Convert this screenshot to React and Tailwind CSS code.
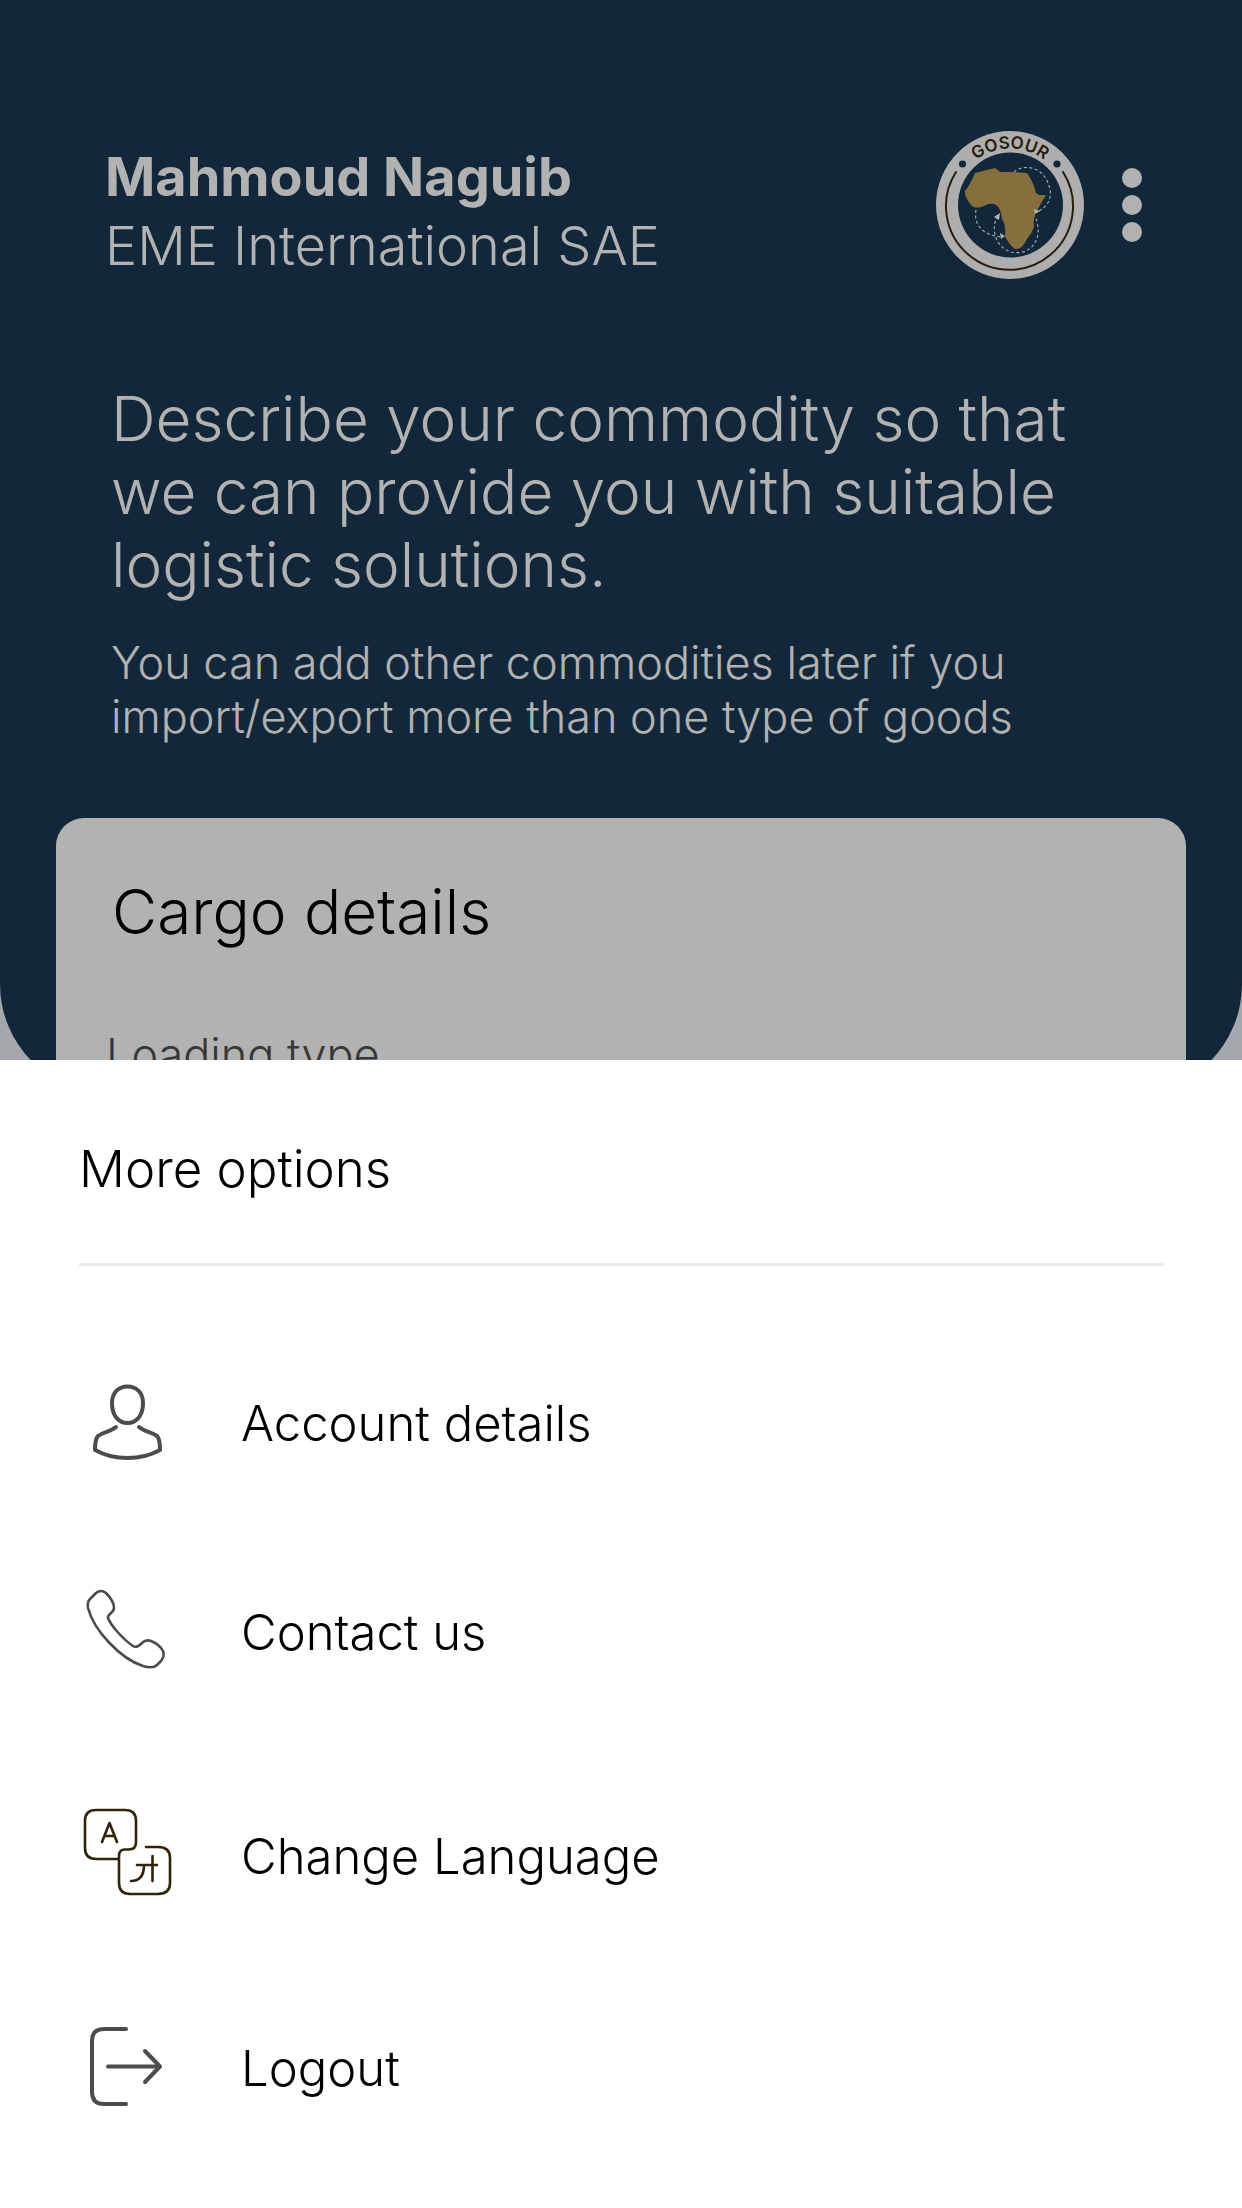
import React, { useState } from 'react';

const GosourLogo = () => (
  <svg viewBox="0 0 148 148" className="w-[148px] h-[148px]" role="img" aria-label="Gosour">
    <defs>
      <path id="logo-arc" d="M 17.500 74 A 56.500 56.500 0 0 1 130.500 74" />
    </defs>
    <circle cx="74" cy="74" r="74" fill="#fafafa" />
    <circle cx="74.500" cy="74" r="52.5" fill="#1a3854" />
    <path d="M20 41 A63.500 63.500 0 1 0 127 41" fill="none" stroke="#3a2c10" strokeWidth="2" strokeLinecap="round" />
    <circle cx="26.500" cy="33" r="3.600" fill="#1a3854" />
    <circle cx="121" cy="33" r="3.600" fill="#1a3854" />
    <text fontFamily="Inter" fontSize="17" fontWeight="600" fill="#3a2c10" textAnchor="middle">
      <textPath href="#logo-arc" startOffset="50%">GOSOUR</textPath>
    </text>
    <g fill="none" stroke="#e8f1f8" strokeWidth="1.200" strokeDasharray="3 2.500">
      <path d="M78 41 C86 33 106 35 112 52 C118 66 112 76 101 81" />
      <path d="M40 79 C37 94 48 105 66 106" />
      <path d="M62 85 C54 97 59 116 75 121 C94 125 104 110 102 96 C101 90 100 87 98 84" />
    </g>
    <path
      d="M39 42 L59 37 L64 41 L75 41 L91 42 Q97 50 100 62 L103 64 L110 64 Q103 76 99 83 Q97 91 98 96 Q96 102 91 108 Q86 119 79 118 Q73 114 69 105 Q70 94 66 88 Q65 77 60 74 Q54 71 48 75 Q40 78 36 75 Q28 66 29 60 Q34 54 39 42 Z"
      fill="#c09f58"
    />
    <path d="M64 82 L63 89 L58 86 Z M98 78 L104 80 L99 83 Z M64 102 L69 105 L65 108 Z" fill="#fff" />
  </svg>
);

const AccountIcon = () => (
  <svg viewBox="0 4 120 120" className="w-[120px] h-[120px]" fill="none" stroke="#4b4c4e" strokeWidth="4" strokeLinecap="round" strokeLinejoin="round">
    <path d="M57.500 26.500 C66 26.500 73 32 73 43 C73 55 67 63 57.500 63 C48 63 42 55 42 43 C42 32 49 26.500 57.500 26.500 Z" />
    <path d="M46 67 C40 72 33 72 28 76 C25 79 25 85 25 90 C34 95 45 98 57.500 98 C70 98 81 95 90 90 C90 85 90 79 87 76 C82 72 75 72 69 67" />
  </svg>
);

const PhoneIcon = () => (
  <svg viewBox="0 3 120 120" className="w-[120px] h-[120px]" fill="none" stroke="#4b4c4e" strokeWidth="2.600" strokeLinecap="round" strokeLinejoin="round">
    <path d="M20 29 L26 23 Q31 19 36 23 C40 27 44 33 44 38 C44 43 37 44 38 48 C41 56 54 70 63 76 C66 78 69 76 72 73 Q76 69 81 71 C86 73 91 77 93 81 Q95 86 91 91 L87 95 Q83 99 73 96 C51 89 24 61 18 38 Q17 32 20 29 Z" />
  </svg>
);

const LanguageIcon = () => (
  <svg viewBox="0 7 120 120" className="w-[120px] h-[120px]" fill="none" stroke="#302308" strokeWidth="2.600" strokeLinecap="round" strokeLinejoin="round">
    <path d="M49 69 H26 Q15 69 15 58 V31 Q15 20 26 20 H55 Q66 20 66 31 V52 Q66 59.500 59 59.500 H55 Q49 59.500 49 66 V93 Q49 104 60 104 H88 Q100 104 100 93 V68 Q100 57 88 57 H76" />
    <path d="M32 52 L39.500 33 L47 52 M35 46 H44" />
    <path d="M67 75 H87 M82.500 66 V91 M74 75 C74 85 70 91 61 91" />
  </svg>
);

const LogoutIcon = () => (
  <svg viewBox="0 0 120 120" className="w-[120px] h-[120px]" fill="none" stroke="#4b4c4e" strokeWidth="4" strokeLinecap="round" strokeLinejoin="round">
    <path d="M56 20 H34 Q22 20 22 32 V83 Q22 95 34 95 H56" />
    <path d="M38 57.500 H90 M75 42 L90 57.500 L75 73" />
  </svg>
);

const menuItems = [
  { id: "account", label: "Account details", icon: AccountIcon, height: "h-[196px]" },
  { id: "contact", label: "Contact us", icon: PhoneIcon, height: "h-[222px]" },
  { id: "language", label: "Change Language", icon: LanguageIcon, height: "h-[226px]" },
  { id: "logout", label: "Logout", icon: LogoutIcon, height: "h-[198px]" }
];

const MoreOptionsSheet = ({ isOpen, onClose }) => {
  if (!isOpen) return null;

  return (
    <div className="fixed inset-0 bg-black/30 flex flex-col justify-end z-50" onClick={onClose}>
      <div className="bg-white text-black pb-10" role="dialog" aria-label="More options" onClick={(e) => e.stopPropagation()}>
        <div className="ml-[79px] mr-[78px] pt-[68px] pb-[53px] border-b-[3px] border-[#ebebeb]">
          <h2 className="text-[51px] leading-[82px]">More options</h2>
        </div>

        <div className="pt-[60px]">
          {menuItems.map((item) => (
            <button key={item.id} type="button" className={`w-full flex items-center gap-[51px] pl-[70px] text-left ${item.height}`}>
              <item.icon />
              <span className="text-[49px] leading-[60px]">{item.label}</span>
            </button>
          ))}
        </div>
      </div>
    </div>
  );
};

export default function App() {
  const [menuOpen, setMenuOpen] = useState(true);

  return (
    <div className="min-h-screen bg-[#ebf0f5] font-['Inter',sans-serif] font-light">
      {/* Header */}
      <header className="bg-[#1a3854] text-white rounded-b-[110px] pt-[130px] pb-[350px]">
        <div className="flex items-center pl-[105px] pr-20">
          <div className="flex-1 pt-3 text-[54px] leading-[69px]">
            <h1 className="font-bold">Mahmoud Naguib</h1>
            <p>EME International SAE</p>
          </div>
          <GosourLogo />
          <button type="button" aria-label="More options" onClick={() => setMenuOpen(true)} className="flex flex-col items-center gap-[7px] ml-[18px] px-5">
            <span className="w-5 h-5 rounded-full bg-white" />
            <span className="w-5 h-5 rounded-full bg-white" />
            <span className="w-5 h-5 rounded-full bg-white" />
          </button>
        </div>

        <div className="pl-[111px] pr-20 pt-[102px]">
          <p className="text-[62px] leading-[73px]">
            Describe your commodity so that<br />we can provide you with suitable<br />logistic solutions.
          </p>
          <p className="text-[45px] leading-[54px] pt-[35px]">
            You can add other commodities later if you<br />import/export more than one type of goods
          </p>
        </div>
      </header>

      {/* Cargo card */}
      <main className="-mt-[276px] mx-14 bg-white rounded-[28px] px-[50px] pt-[54px] pb-20">
        <h2 className="text-[62px] leading-[80px] text-black pl-1.5">Cargo details</h2>
        <p className="text-[45px] leading-[54px] text-[#505050] pt-[76px]">Loading type</p>
      </main>

      <MoreOptionsSheet isOpen={menuOpen} onClose={() => setMenuOpen(false)} />
    </div>
  );
}
